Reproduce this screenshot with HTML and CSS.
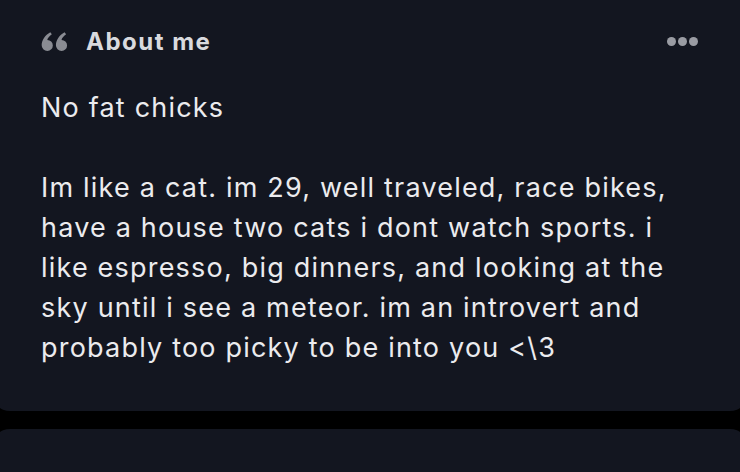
FILE: index.html
```html
<!DOCTYPE html>
<html lang="en">
<head>
  <meta charset="UTF-8" />
  <meta name="viewport" content="width=device-width, initial-scale=1" />
  <title>About me</title>
  <link rel="stylesheet" href="styles.css">
</head>
<body>

  <section class="card about">
    <div class="card-head">
      <h2 class="card-title">
        <svg class="quote-icon" viewBox="0 0 28 20" width="27" height="19" aria-hidden="true">
          <path d="M6.5 20a6 6 0 0 1-6-6.2C.5 8.6 4 3.4 9.6.2l1.6 2.2C8.4 4.4 6.8 6.6 6.4 8.4a5.8 5.8 0 1 1 .1 11.6z" />
          <path d="M21.5 20a6 6 0 0 1-6-6.2c0-5.2 3.5-10.4 9.1-13.6l1.6 2.2c-2.8 2-4.4 4.2-4.8 6a5.8 5.8 0 1 1 .1 11.6z" />
        </svg>
        About me
      </h2>
      <button class="more" aria-label="More">
        <span></span><span></span><span></span>
      </button>
    </div>

    <p class="bio">No fat chicks</p>
    <p class="bio">Im like a cat. im 29, well traveled, race bikes, have a house two cats i dont watch sports. i like espresso, big dinners, and looking at the sky until i see a meteor. im an introvert and probably too picky to be into you &lt;\3</p>
  </section>

  <section class="card next"></section>

</body>
</html>
```

FILE: styles.css
```css
body {
  margin: 0;
  background: #000;
  font-family: 'Inter', 'Open Sans', sans-serif;
  color: #ebebee;
  overflow: hidden;
  height: 472px;
}

.card {
  background: #131620;
  border-radius: 18px;
  margin: 0 -8px;
  padding: 0 49px;
}

.about {
  margin-top: -20px;
  padding-top: 46px;
  padding-bottom: 43px;
}

.next {
  margin-top: 18px;
  height: 60px;
}

.card-head {
  display: flex;
  align-items: center;
  justify-content: space-between;
  height: 30px;
}

.card-title {
  display: flex;
  align-items: center;
  gap: 18px;
  margin: 0;
  font-size: 24px;
  font-weight: 700;
  letter-spacing: 1.5px;
  color: #d9dade;
}

.quote-icon {
  fill: #8a8c93;
}

.more {
  display: flex;
  gap: 2px;
  padding: 0;
  margin-right: 1px;
  background: none;
  border: none;
}

.more span {
  width: 9px;
  height: 9px;
  border-radius: 50%;
  background: #9a9ca3;
}

.bio {
  max-width: 650px;
  margin: 32px 0 0;
  font-size: 27px;
  line-height: 40px;
  letter-spacing: 1.2px;
}

.bio + .bio {
  margin-top: 40px;
}
```
